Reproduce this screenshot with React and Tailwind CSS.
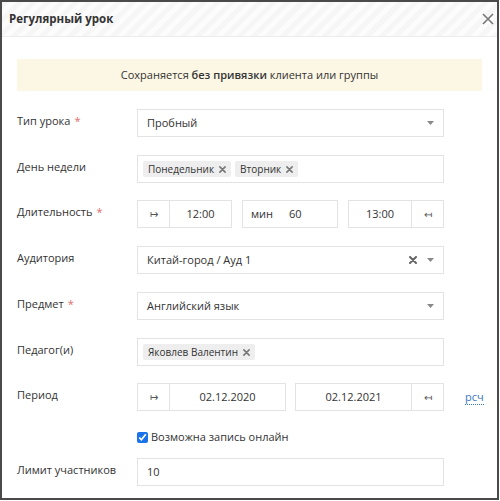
import React from 'react';

const font = { fontFamily: '"Open Sans", "Noto Sans", sans-serif' };

const Label = ({ children, required }) => (
  <div className="w-[120px] shrink-0 pt-[3px] text-[11px] leading-[18px] text-[#333]">
    {children}
    {required && <span className="ml-[4px] text-[#e06c6c]">*</span>}
  </div>
);

const Caret = () => (
  <svg width="7" height="4" viewBox="0 0 7 4" className="shrink-0">
    <path d="M0 0 L7 0 L3.5 4 Z" fill="#888" />
  </svg>
);

const Cross = ({ size = 7, color = '#777', width = 1.8 }) => (
  <svg width={size} height={size} viewBox="0 0 8 8" className="shrink-0">
    <path d="M1 1 L7 7 M7 1 L1 7" stroke={color} strokeWidth={width} strokeLinecap="round" />
  </svg>
);

const Tag = ({ children }) => (
  <span className="flex h-[16px] items-center gap-[5px] rounded-[2px] bg-[#eeeeee] px-[5px] text-[10px] text-[#333]">
    {children}
    <Cross />
  </span>
);

const Box = ({ className = '', children }) => (
  <div className={'flex h-[28px] items-center border border-[#e3e3e3] bg-white text-[11px] text-[#333] ' + className}>
    {children}
  </div>
);

const Row = ({ label, required, children, className = '' }) => (
  <div className={'flex items-start ' + className}>
    <Label required={required}>{label}</Label>
    {children}
  </div>
);

export default function App() {
  return (
    <div style={font} className="h-[500px] w-[499px] overflow-hidden border-2 border-[#4a4a4a] bg-white">
      <div className="flex h-[35px] items-center justify-between border-b border-[#ececec] bg-[repeating-linear-gradient(135deg,#f6f6f6_0px,#f6f6f6_5px,#fcfcfc_5px,#fcfcfc_10px)] pl-[7px] pr-[3px]">
        <span className="text-[11.5px] font-bold text-[#333]">Регулярный урок</span>
        <svg width="12" height="12" viewBox="0 0 12 12">
          <path d="M1 1 L11 11 M11 1 L1 11" stroke="#777" strokeWidth="1.6" />
        </svg>
      </div>

      <div className="px-[15px]">
        <div className="mt-[22px] flex h-[32px] items-center justify-center bg-[#fcf7e4] text-[11px] text-[#333]">
          <span>
            Сохраняется <b className="font-semibold">без привязки</b> клиента или группы
          </span>
        </div>

        <Row label="Тип урока" required className="mt-[18px]">
          <Box className="w-[307px] justify-between pl-[9px] pr-[9px]">
            <span>Пробный</span>
            <Caret />
          </Box>
        </Row>

        <Row label="День недели" className="mt-[18px]">
          <Box className="w-[307px] gap-[4px] pl-[5px]">
            <Tag>Понедельник</Tag>
            <Tag>Вторник</Tag>
          </Box>
        </Row>

        <Row label="Длительность" required className="mt-[17px]">
          <div className="flex gap-[10px]">
            <Box className="w-[95px]">
              <span className="flex h-full w-[32px] items-center justify-center border-r border-[#e3e3e3] text-[10px] text-[#555]">↦</span>
              <span className="flex-1 text-center">12:00</span>
            </Box>
            <Box className="w-[96px] pl-[8px]">
              <span>мин</span>
              <span className="ml-[16px]">60</span>
            </Box>
            <Box className="w-[96px]">
              <span className="flex-1 text-center">13:00</span>
              <span className="flex h-full w-[32px] items-center justify-center border-l border-[#e3e3e3] text-[10px] text-[#555]">↤</span>
            </Box>
          </div>
        </Row>

        <Row label="Аудитория" className="mt-[18px]">
          <Box className="w-[307px] justify-between pl-[9px] pr-[9px]">
            <span>Китай-город / Ауд 1</span>
            <span className="flex items-center gap-[10px]">
              <Cross size={8} color="#666" width={2} />
              <Caret />
            </span>
          </Box>
        </Row>

        <Row label="Предмет" required className="mt-[18px]">
          <Box className="w-[307px] justify-between pl-[9px] pr-[9px]">
            <span>Английский язык</span>
            <Caret />
          </Box>
        </Row>

        <Row label="Педагог(и)" className="mt-[18px]">
          <Box className="w-[307px] pl-[5px]">
            <Tag>Яковлев Валентин</Tag>
          </Box>
        </Row>

        <Row label="Период" className="mt-[17px]">
          <div className="flex items-center">
            <div className="flex gap-[9px]">
              <Box className="w-[149px]">
                <span className="flex h-full w-[32px] items-center justify-center border-r border-[#e3e3e3] text-[10px] text-[#555]">↦</span>
                <span className="flex-1 text-center">02.12.2020</span>
              </Box>
              <Box className="w-[149px]">
                <span className="flex-1 text-center">02.12.2021</span>
                <span className="flex h-full w-[32px] items-center justify-center border-l border-[#e3e3e3] text-[10px] text-[#555]">↤</span>
              </Box>
            </div>
            <span className="ml-[21px] border-b border-dotted border-[#3a78c2] text-[11px] leading-[15px] text-[#3a78c2]">рсч</span>
          </div>
        </Row>

        <div className="mt-[16px] flex h-[20px] items-center pl-[120px] text-[11px] text-[#333]">
          <input type="checkbox" defaultChecked className="m-0 mr-[3px] h-[11px] w-[11px] accent-[#1a73e8]" />
          <span>Возможна запись онлайн</span>
        </div>

        <Row label="Лимит участников" className="mt-[11px]">
          <Box className="w-[307px] pl-[9px]">
            <span>10</span>
          </Box>
        </Row>
      </div>
    </div>
  );
}
